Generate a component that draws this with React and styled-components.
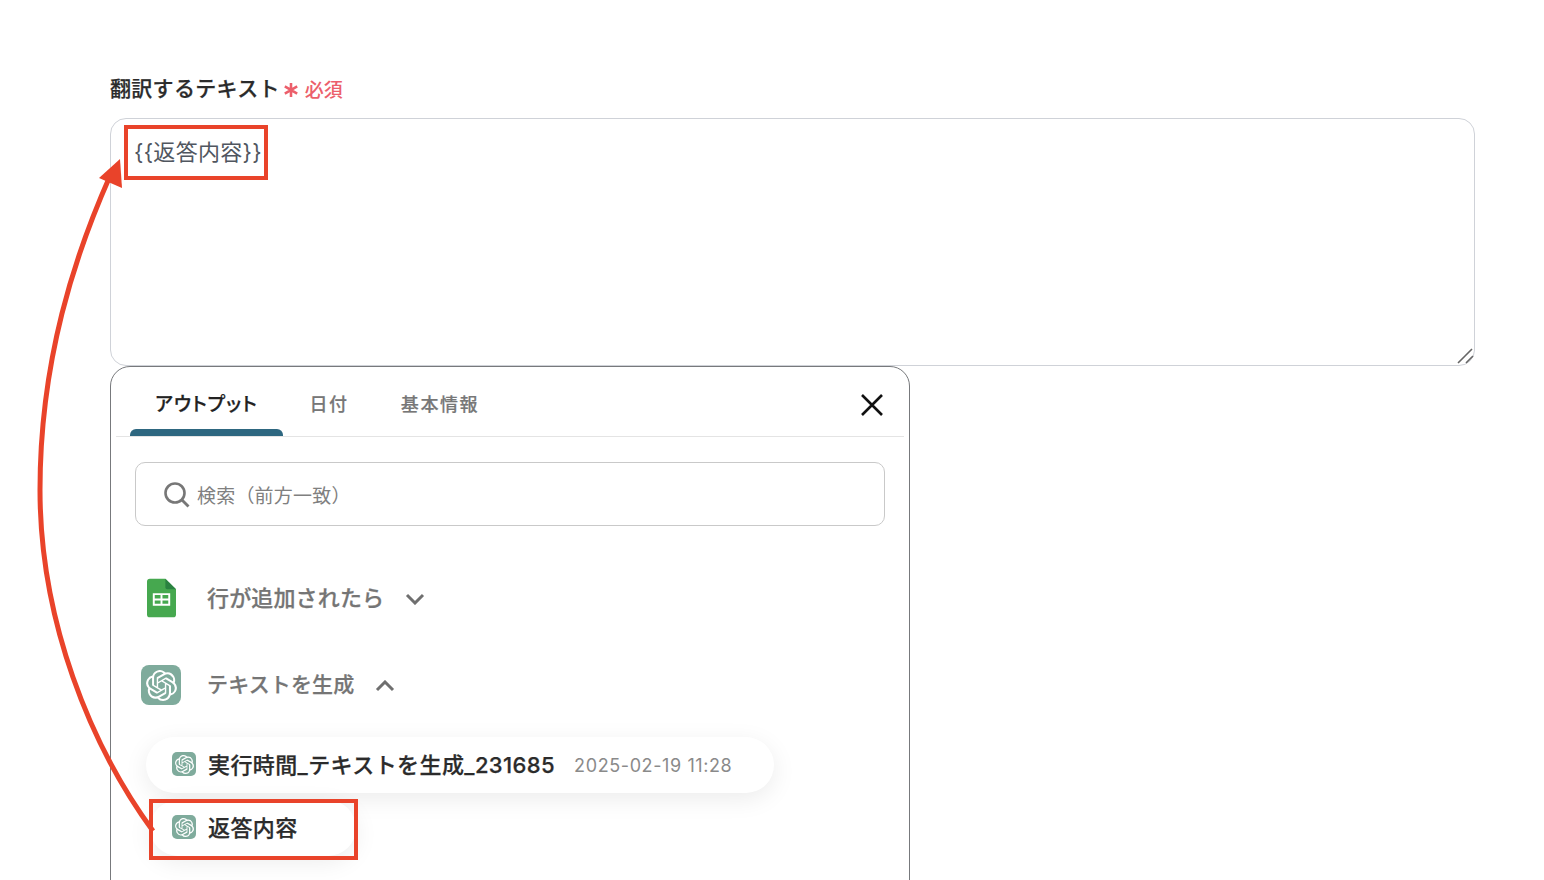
import React from 'react';
import styled, { createGlobalStyle } from 'styled-components';
import { SiOpenai } from 'react-icons/si';

const fontStack = `Inter, "Noto Sans CJK JP", sans-serif`;
const red = '#e9432a';

const GlobalStyle = createGlobalStyle`
  html, body {
    margin: 0;
    height: 880px;
    overflow: hidden;
    background: #fff;
    font-family: ${fontStack};
  }
`;

const Page = styled.div`
  position: relative;
  height: 880px;
  overflow: hidden;
  padding: 72px 69px 0 110px;
`;

const LabelRow = styled.div`
  display: flex;
  align-items: center;
  height: 30px;
  margin-bottom: 16px;
`;

const Label = styled.span`
  font-size: 21px;
  font-weight: 500;
  letter-spacing: 0.3px;
  -webkit-text-stroke: 0.25px #2b2b2b;
  color: #2b2b2b;
`;

const Required = styled.span`
  display: flex;
  align-items: center;
  margin: 2px 0 0 3px;
  font-size: 19px;
  font-weight: 500;
  color: #ec5f6b;
`;

const Star = styled.svg`
  width: 16px;
  height: 16px;
  margin: 3px 6px 0 0;
`;

const TextAreaWrap = styled.div`
  position: relative;
  height: 248px;
`;

const TextArea = styled.textarea`
  display: block;
  box-sizing: border-box;
  width: 100%;
  height: 100%;
  padding: 18px 23px;
  border: 1px solid #cfd2d8;
  border-radius: 16px;
  outline: none;
  resize: none;
  font-family: ${fontStack};
  font-size: 22px;
  letter-spacing: 0.3px;
  line-height: 30px;
  color: #50565f;
`;

const Grip = styled.svg`
  position: absolute;
  right: 1px;
  bottom: 2px;
  width: 17px;
  height: 16px;
`;

const Highlight = styled.div`
  position: absolute;
  box-sizing: border-box;
  border: 4px solid ${red};
  left: ${p => p.$left}px;
  top: ${p => p.$top}px;
  width: ${p => p.$width}px;
  height: ${p => p.$height}px;
`;

const Panel = styled.div`
  box-sizing: border-box;
  width: 800px;
  height: 560px;
  border: 1px solid #77797c;
  border-radius: 20px;
  padding: 0 5px;
  background: #fff;
`;

const TabBar = styled.div`
  display: flex;
  align-items: stretch;
  height: 69px;
  border-bottom: 1px solid #e4e4e4;
`;

const Tab = styled.div`
  position: relative;
  display: flex;
  align-items: center;
  justify-content: center;
  box-sizing: border-box;
  width: ${p => p.$width}px;
  padding-top: 2px;
  font-size: ${p => (p.$active ? 19 : 18)}px;
  font-weight: 500;
  letter-spacing: ${p => (p.$active ? '1px' : '1.6px')};
  font-feature-settings: ${p => (p.$active ? '"palt"' : 'normal')};
  -webkit-text-stroke: ${p => (p.$active ? '0.25px #222' : '0.2px #777')};
  color: ${p => (p.$active ? '#222' : '#777')};
  ${p => p.$active && 'margin-left: 14px;'}
`;

const TabIndicator = styled.div`
  position: absolute;
  left: 0;
  right: 0;
  bottom: 0;
  height: 7px;
  border-radius: 6px 6px 0 0;
  background: #2e6780;
`;

const CloseButton = styled.div`
  display: flex;
  align-items: center;
  margin-left: auto;
  padding: 0 20px 0 0;
  height: 76px;
`;

const SearchBox = styled.div`
  display: flex;
  align-items: center;
  box-sizing: border-box;
  height: 64px;
  margin: 25px 19px 0;
  padding-left: 27px;
  border: 1px solid #c9c9c9;
  border-radius: 10px;
`;

const SearchIcon = styled.svg`
  width: 27px;
  height: 27px;
  flex: none;
`;

const SearchInput = styled.input`
  flex: 1;
  margin: 5px 0 0 7px;
  border: none;
  outline: none;
  padding: 0;
  font-family: ${fontStack};
  font-size: 19px;
  letter-spacing: 0.2px;
  color: #777;
  &::placeholder {
    color: #808080;
    opacity: 1;
  }
`;

const Section = styled.div`
  display: flex;
  align-items: center;
  height: 40px;
  margin-top: ${p => p.$top}px;
  padding-left: 25px;
`;

const IconSlot = styled.div`
  display: flex;
  justify-content: center;
  width: 40px;
  flex: none;
  margin-right: 26px;
`;

const SectionTitle = styled.span`
  font-weight: 500;
  color: #757575;
  -webkit-text-stroke: 0.25px #757575;
  font-size: ${p => p.$size}px;
  letter-spacing: 0.15px;
  padding-bottom: 4px;
`;

const Chevron = styled.svg`
  width: 20px;
  height: 12px;
  margin-left: ${p => p.$gap}px;
  margin-top: 2px;
`;

const OpenAiBadge = styled.div`
  display: flex;
  align-items: center;
  justify-content: center;
  flex: none;
  width: ${p => p.$size}px;
  height: ${p => p.$size}px;
  border-radius: ${p => Math.round(p.$size / 5)}px;
  background: #7fab9c;
  color: #fff;
`;

const Pill = styled.div`
  position: relative;
  display: flex;
  align-items: center;
  box-sizing: border-box;
  width: ${p => p.$width}px;
  height: 56px;
  margin-top: ${p => p.$top}px;
  margin-left: ${p => p.$left}px;
  padding-left: ${p => p.$pad}px;
  padding-bottom: 2px;
  border-radius: 28px;
  background: #fff;
  box-shadow: 0 6px 24px rgba(0, 0, 0, 0.08);
`;

const PillName = styled.span`
  margin: 0 0 2px 12px;
  font-size: 22px;
  font-weight: 500;
  letter-spacing: 0.4px;
  -webkit-text-stroke: 0.25px #2b2b2b;
  color: #2b2b2b;
  white-space: nowrap;
`;

const PillDate = styled.span`
  margin: 2px 0 0 19px;
  font-size: 18px;
  letter-spacing: 0.6px;
  color: #8a8a8a;
  white-space: nowrap;
`;

const ArrowLayer = styled.svg`
  position: absolute;
  left: 0;
  top: 0;
  pointer-events: none;
`;

const OpenAiIcon = ({ size }) => (
  <OpenAiBadge $size={size}>
    <SiOpenai size={Math.round(size * 0.78)} />
  </OpenAiBadge>
);

const SheetsIcon = () => (
  <svg width="29" height="40" viewBox="0 0 30 40">
    <path d="M3 0H19L30 11V37a3 3 0 0 1-3 3H3a3 3 0 0 1-3-3V3a3 3 0 0 1 3-3Z" fill="#46a84f" />
    <path d="M19 0L30 11H21a2 2 0 0 1-2-2Z" fill="#2a8240" />
    <path d="M6 15H24V28H6ZM8 17V20.5H14V17ZM16 17V20.5H22V17ZM8 22.5V26H14V22.5ZM16 22.5V26H22V22.5Z" fill="#fff" fillRule="evenodd" />
  </svg>
);

const App = () => {
  return (
    <Page>
      <GlobalStyle />
      <LabelRow>
        <Label>翻訳するテキスト</Label>
        <Required>
          <Star viewBox="0 0 15 15">
            <path d="M7.5 1V14M1.7 4.2L13.3 10.8M13.3 4.2L1.7 10.8" stroke="#ec5f6b" strokeWidth="2.4" fill="none" />
          </Star>
          必須
        </Required>
      </LabelRow>
      <TextAreaWrap>
        <TextArea defaultValue="{{返答内容}}" />
        <Grip viewBox="0 0 17 16">
          <path d="M1 15L15 1M9 15L16 8" stroke="#666" strokeWidth="1.6" fill="none" />
        </Grip>
        <Highlight $left={14} $top={7} $width={144} $height={55} />
      </TextAreaWrap>
      <Panel>
        <TabBar>
          <Tab $active $width={153}>
            アウトプット
            <TabIndicator />
          </Tab>
          <Tab $width={92}>日付</Tab>
          <Tab $width={130}>基本情報</Tab>
          <CloseButton>
            <svg width="24" height="24" viewBox="0 0 24 24">
              <path d="M2 2L22 22M22 2L2 22" stroke="#111" strokeWidth="2.6" fill="none" />
            </svg>
          </CloseButton>
        </TabBar>
        <SearchBox>
          <SearchIcon viewBox="0 0 27 27">
            <circle cx="12" cy="12" r="9.5" stroke="#777" strokeWidth="2.6" fill="none" />
            <path d="M19 19L25.5 25.5" stroke="#777" strokeWidth="2.8" fill="none" />
          </SearchIcon>
          <SearchInput placeholder="検索（前方一致）" />
        </SearchBox>
        <Section $top={52}>
          <IconSlot><SheetsIcon /></IconSlot>
          <SectionTitle $size={22}>行が追加されたら</SectionTitle>
          <Chevron $gap={21} viewBox="0 0 20 12">
            <path d="M2 2L10 10L18 2" stroke="#6f6f6f" strokeWidth="3" fill="none" />
          </Chevron>
        </Section>
        <Section $top={47}>
          <IconSlot><OpenAiIcon size={40} /></IconSlot>
          <SectionTitle $size={21}>テキストを生成</SectionTitle>
          <Chevron $gap={21} viewBox="0 0 20 12">
            <path d="M2 10L10 2L18 10" stroke="#6f6f6f" strokeWidth="3" fill="none" />
          </Chevron>
        </Section>
        <Pill $width={628} $top={32} $left={30} $pad={26}>
          <OpenAiIcon size={24} />
          <PillName>実行時間_テキストを生成_231685</PillName>
          <PillDate>2025-02-19 11:28</PillDate>
        </Pill>
        <Pill $width={206} $top={7} $left={34} $pad={22}>
          <OpenAiIcon size={24} />
          <PillName>返答内容</PillName>
          <Highlight $left={-1} $top={-1} $width={209} $height={61} />
        </Pill>
      </Panel>
      <ArrowLayer width="1544" height="880" viewBox="0 0 1544 880">
        <path d="M153 831C90 745 40 620 40 490C40 360 75 255 110 176" stroke={red} strokeWidth="5" fill="none" />
        <path d="M120 159L99 178L122 188Z" fill={red} />
      </ArrowLayer>
    </Page>
  );
};

export default App;
